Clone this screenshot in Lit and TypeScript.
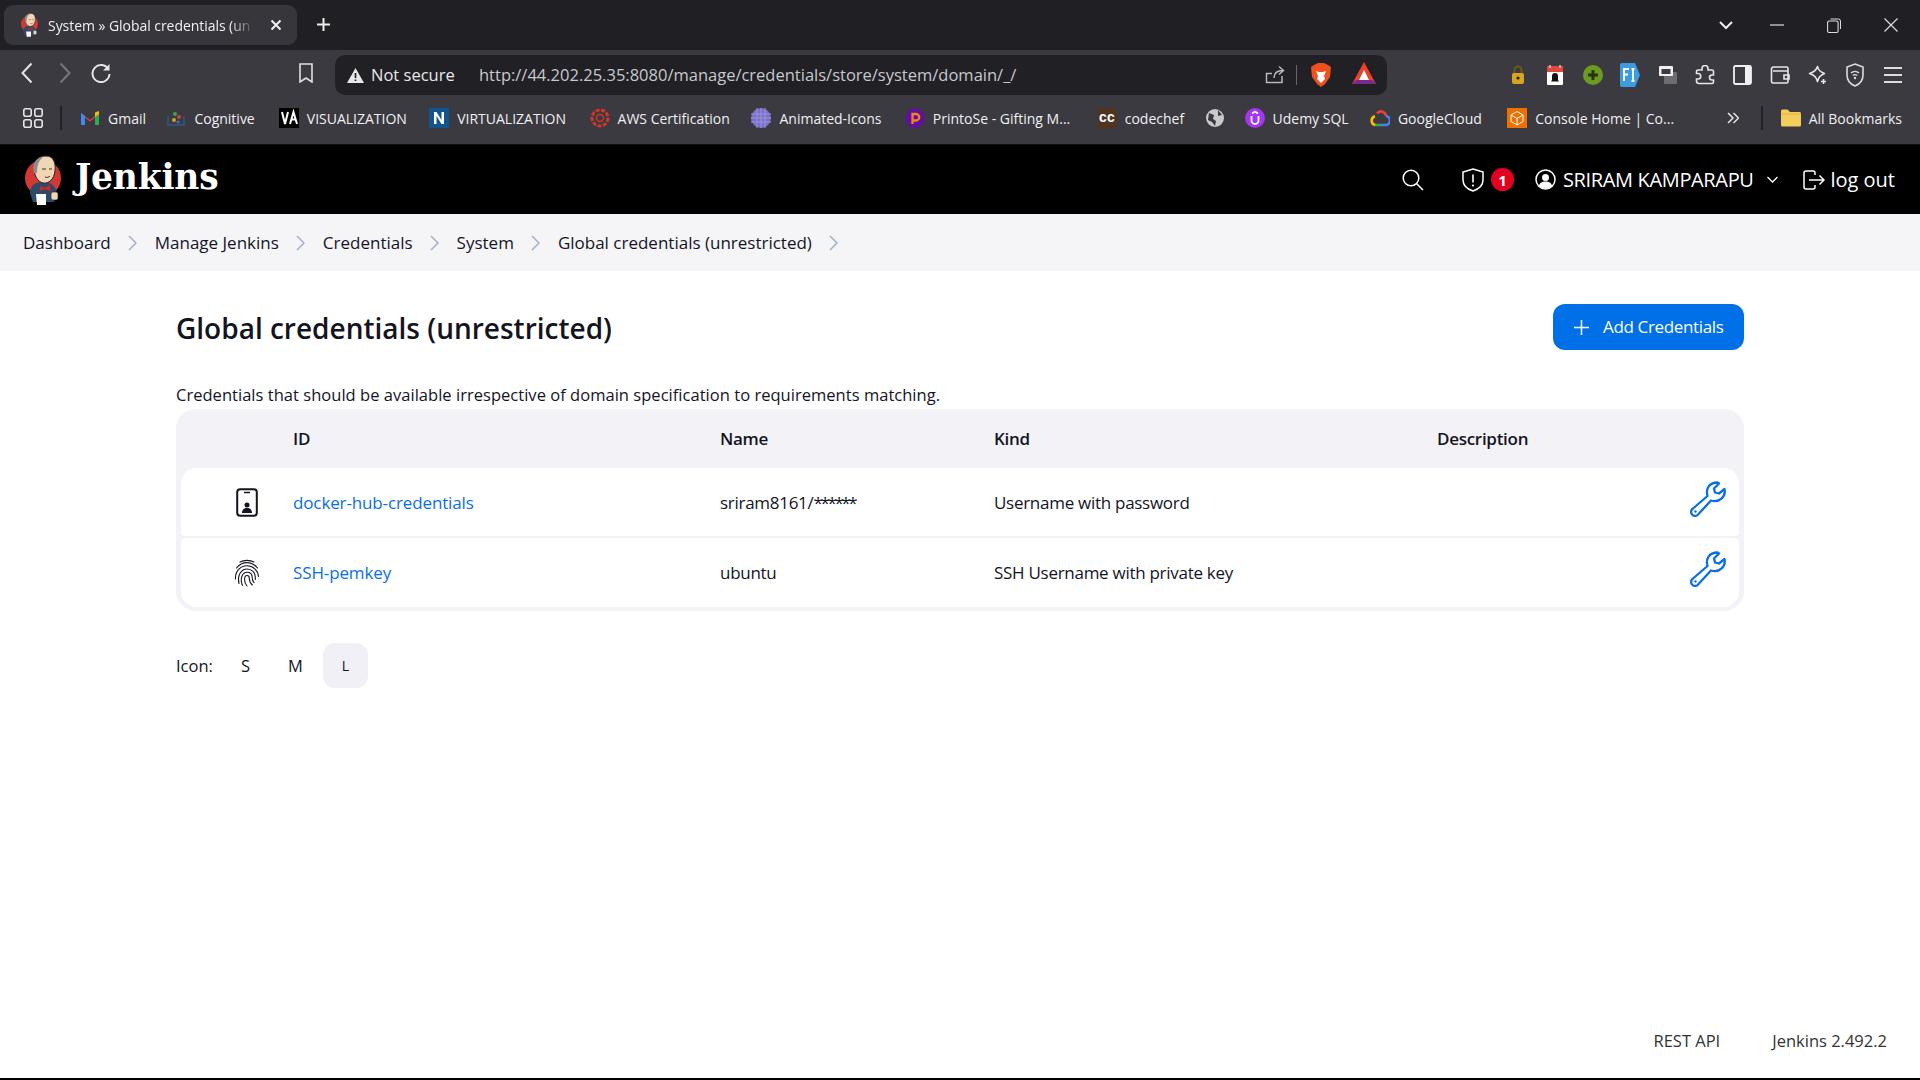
import { LitElement, html, css, svg } from "lit";
import { customElement } from "lit/decorators.js";

const i = (w: number, h: number, body: unknown, vb = `0 0 ${w} ${h}`) =>
  html`<svg width=${w} height=${h} viewBox=${vb} fill="none">${body}</svg>`;

const mascot = (s: number) => html`<svg width=${s} height=${s * 1.25} viewBox="0 0 40 50" fill="none">
  <circle cx="20" cy="23" r="18" fill="#d33833"/>
  <path d="M7 38 C7 30 13 27 20 27 C28 27 33 31 34 39 L31 47 L10 47Z" fill="#2f4a66"/>
  <path d="M11 13 C11 5 17 1 23 1 C30 1 33 7 32 16 C31 24 26 29 20 28 C15 27 11 21 11 13Z" fill="#f0d6b7" stroke="#222" stroke-width="1"/>
  <path d="M11 18 C8 9 13 2 22 1 C16 4 14 10 14 18Z" fill="#8d8d8d"/>
  <path d="M19 14h4M26 14h3M22 22c2 1 4 0 5-1" stroke="#333" stroke-width="1"/>
  <path d="M17 31l5 2 5-3v6l-5-2-5 2z" fill="#e02020"/>
  <path d="M13 39h10v11h-9z" fill="#fff"/>
  <rect x="28" y="37" width="7" height="8" rx="2" fill="#f0d6b7" stroke="#222" stroke-width=".6"/>
</svg>`;

const chevL = (c: string) => i(12, 22, svg`<path d="M10.500 1.500 1.500 11l9 9.500" stroke=${c} stroke-width="2"/>`);
const chevR = (c: string) => i(12, 22, svg`<path d="M1.500 1.500 10.500 11l-9 9.500" stroke=${c} stroke-width="2"/>`);

const bookmarks = [
  { t: "Gmail", w: 38, icon: i(20, 16, svg`<path d="M1 15V3l9 7 9-7v12h-4V7.500L10 11.500 5 7.500V15z" fill="#ea4335"/><path d="M1 15V3l4 3v9z" fill="#4285f4"/><path d="M19 15V3l-4 3v9z" fill="#34a853"/><path d="M15 2.500 19 1v3l-4 3z" fill="#fbbc04"/>`) },
  { t: "Cognitive", w: 64, icon: i(20, 20, svg`<path d="M2 8v9h16V8" stroke="#2b5a86" stroke-width="1.600"/><circle cx="9" cy="6" r="2" fill="#3aa655"/><circle cx="13" cy="9" r="2" fill="#d04040"/><circle cx="8" cy="12" r="2" fill="#c9a227"/><circle cx="12" cy="14" r="1.600" fill="#3a6fc0"/>`) },
  { t: "VISUALIZATION", w: 102, icon: i(20, 20, svg`<rect width="20" height="20" fill="#000"/><path d="M3 4l3 12 3-12M11 16l3.500-12L18 16M12 11.500h5" stroke="#fff" stroke-width="2"/>`) },
  { t: "VIRTUALIZATION", w: 112, icon: i(20, 20, svg`<rect width="20" height="20" fill="#13548e"/><path d="M5 16V4h2.500l5 8V4H15v12h-2.500l-5-8v8z" fill="#fff"/>`) },
  { t: "AWS Certification", w: 113.5, icon: i(20, 20, svg`<circle cx="10" cy="10" r="8" stroke="#d8352a" stroke-width="3" stroke-dasharray="4 1.500"/><circle cx="10" cy="10" r="3.500" stroke="#d8352a" stroke-width="1.400"/>`) },
  { t: "Animated-Icons", w: 105, icon: i(20, 20, svg`<circle cx="10" cy="10" r="10" fill="#7a70c8"/><path d="M0 6h20M0 10h20M0 14h20M6 0v20M10 0v20M14 0v20" stroke="#9a92dc" stroke-width="1"/>`) },
  { t: "PrintoSe - Gifting M...", w: 143.5, icon: i(20, 20, svg`<circle cx="10" cy="10" r="10" fill="#5e1396"/><path d="M7.500 16V6h3.500a3 3 0 0 1 0 6.500H7.500" stroke="#f58220" stroke-width="2.300"/>`) },
  { t: "codechef", w: 61, icon: html`<span class="cc">cc</span>` },
  { t: "", w: -8, icon: i(18, 18, svg`<circle cx="9" cy="9" r="9" fill="#c9c9cc"/><path d="M3 4l5 2-1 4 3 2-1 5-3-4-4-2zM12 1l4 5-4 1z" fill="#3a3a40"/>`) },
  { t: "Udemy SQL", w: 77, icon: i(20, 20, svg`<circle cx="10" cy="10" r="10" fill="#a435f0"/><path d="M6.500 8v4.500a3.500 3.500 0 0 0 7 0V8M7 5.500 10 3.500 13 5.500" stroke="#fff" stroke-width="1.800"/>`) },
  { t: "GoogleCloud", w: 89, icon: i(20, 18, svg`<path d="M7 4.500A5 5 0 0 1 16 7" stroke="#ea4335" stroke-width="2.600"/><path d="M16 7a4.500 4.500 0 0 1-1 9h-4" stroke="#4285f4" stroke-width="2.600"/><path d="M11 16H5.500" stroke="#34a853" stroke-width="2.600"/><path d="M5.500 16A4.500 4.500 0 0 1 5 7.200" stroke="#fbbc04" stroke-width="2.600"/>`) },
  { t: "Console Home | Co...", w: 138, icon: i(20, 20, svg`<rect width="20" height="20" fill="#ed7100"/><path d="M10 3.500 16 7v6.500L10 17l-6-3.500V7zM4 7l6 3.500L16 7M10 10.500V17" stroke="#fff" stroke-width="1"/>`) },
];

const extIcons = [
  i(14, 20, svg`<rect x="1" y="8" width="12" height="11" rx="2" fill="#d9a520"/><path d="M3.500 8V5a3.500 3.500 0 0 1 7 0v3" stroke="#6b5a1a" stroke-width="2"/><circle cx="7" cy="13" r="1.600" fill="#222"/>`),
  i(16, 20, svg`<rect y="1" width="16" height="19" rx="1" fill="#fff"/><rect y="1" width="16" height="6" fill="#e0483e"/><path d="M8 8a3 3 0 0 0-3 3v4l-1 1.500h8L11 15v-4a3 3 0 0 0-3-3z" fill="#111"/><path d="M3 0v3M13 0v3" stroke="#ccc" stroke-width="1.500"/>`),
  i(20, 20, svg`<circle cx="10" cy="10" r="10" fill="#6d9b1f"/><path d="M10 5v10M5 10h10" stroke="#26350c" stroke-width="3"/>`),
  i(20, 24, svg`<path d="M2 0h13l5 12-5 12H2a2 2 0 0 1-2-2V2a2 2 0 0 1 2-2z" fill="#3d9be0"/><path d="M4 18V6h5M4 11.500h4M11.500 6h3M13 6v12M11.500 18h3" stroke="#fff" stroke-width="1.800"/>`),
  i(18, 18, svg`<rect x="5" y="6" width="13" height="12" rx="1" fill="#6d6d70"/><rect width="14" height="10" rx="1" fill="#f0f0f0"/><rect x="2.500" y="3" width="9" height="5" fill="#3a3a40"/>`),
  i(20, 20, svg`<path d="M7 3.500a3 3 0 0 1 6 0V5h4a1.500 1.500 0 0 1 1.500 1.500V10H17a2.500 2.500 0 0 0 0 5h1.500v2a1.500 1.500 0 0 1-1.500 1.500H4A2.500 2.500 0 0 1 1.500 16v-2H3a2.700 2.700 0 0 0 0-5.500H1.500V6.500A1.500 1.500 0 0 1 3 5h4z" stroke="#e6e6e8" stroke-width="1.600"/>`),
  i(19, 20, svg`<rect x="1" y="1" width="17" height="18" rx="1.500" stroke="#f0f0f0" stroke-width="1.800"/><rect x="12" y="1" width="6" height="18" fill="#f0f0f0"/>`),
  i(20, 20, svg`<path d="M18 6V3.500A1.500 1.500 0 0 0 16.500 2H3.500A2 2 0 0 0 1.500 4v12.500A1.500 1.500 0 0 0 3 18h13.500a1.500 1.500 0 0 0 1.500-1.500V6H3M14 10h5v4h-5z" stroke="#e6e6e8" stroke-width="1.600"/>`),
  i(20, 20, svg`<path d="M9.500 1.500c1 4 2.500 5.500 7 7-4 1.500-6 3.500-7 8-1-4.500-3-6.500-8-8 5-1.500 7-3 8-7z" stroke="#e6e6e8" stroke-width="1.600" stroke-linejoin="round"/><path d="M15.500 14v5M13 16.500h5" stroke="#e6e6e8" stroke-width="1.600"/>`),
  i(18, 24, svg`<path d="M9 1l8 3v8c0 5-3 9-8 11-5-2-8-6-8-11V4z" stroke="#dcdcdf" stroke-width="1.600"/><path d="M5 10a6 6 0 0 1 8 0M6.800 12.500a3.500 3.500 0 0 1 4.400 0" stroke="#dcdcdf" stroke-width="1.400"/><circle cx="9" cy="15" r="1.200" fill="#dcdcdf"/>`),
  i(20, 18, svg`<path d="M1 2h18M1 9h18M1 16h18" stroke="#dcdcdf" stroke-width="1.800"/>`),
];

const wrench = i(36, 36, svg`<path d="M17.500 15C15.500 8 19 1.500 27.500 1.500L29 2.500L24 7.500L25 11.500L29 12.500L34.500 8C36 15 30 22 21 19.500L8.500 33A4 4 0 1 1 3 27.500Z" stroke="#0a6fe2" stroke-width="2.300" stroke-linejoin="round"/><circle cx="5.500" cy="30.500" r="1.200" fill="#0a6fe2"/>`);

const idIcon = i(22, 29, svg`<rect x="1.200" y="1.200" width="19.600" height="26.600" rx="3" stroke="#14141f" stroke-width="2"/><path d="M8 4.500h6" stroke="#14141f" stroke-width="1.500"/><circle cx="11" cy="17" r="2.500" fill="#14141f"/><path d="M6 25c0-3.500 2-5 5-5s5 1.500 5 5z" fill="#14141f"/>`);

const fingerprint = i(26, 28, svg`<g stroke="#14141f" stroke-width="1.100" stroke-linecap="round">
  <path d="M6 3C10 .800 16 .800 20 3"/>
  <path d="M2.500 9C5.500 5 9.500 3.600 13 3.600c4 0 7.500 1.800 10.500 5.400"/>
  <path d="M1.500 20C1 12 6.500 6.800 13 6.800c6 0 11 4.400 11.500 10.700"/>
  <path d="M5 24.500C3 16 7.500 10 13 10c5 0 8.300 3.800 8.300 8v2.500"/>
  <path d="M8.500 26.500C5.500 19.500 8.500 13.200 13 13.200c3.200 0 5.200 2.300 5.200 5.300 0 2 .5 3.700 1.800 5.200"/>
  <path d="M13 27C9.500 23 10 16.500 13 16.500c1.800 0 2.300 1.300 2.300 2.700 0 2.700 1 5 3 6.800"/>
</g>`);

const crumbChevron = i(9, 16, svg`<path d="M1 1l7 7-7 7" stroke="#a0b0c8" stroke-width="1.500"/>`);

@customElement("app-root")
export class AppRoot extends LitElement {
  static styles = css`
    :host { display: flex; flex-direction: column; height: 100vh; background: #fff; overflow: hidden;
      font-family: "Open Sans", "Liberation Sans", sans-serif; color: #14141f; }
    .tabstrip { height: 50px; flex: none; background: #1f1f24; display: flex; align-items: flex-start; color: #eee; }
    .tab { width: 293px; height: 40px; margin: 5px 0 0 4px; background: #36363c; border-radius: 9px; display: flex; align-items: center; padding-left: 16px; box-sizing: border-box; }
    .tab-title { width: 207px; margin-left: 9px; overflow: visible; white-space: nowrap; font-size: 14px; letter-spacing: -.05px; color: #f0f0f0;
      -webkit-mask-image: linear-gradient(90deg, #000 88%, transparent); mask-image: linear-gradient(90deg, #000 88%, transparent); }
    .tab-x { margin-left: 15px; display: flex; }
    .plus { margin: 17px 0 0 19px; display: flex; }
    .wincontrols { margin-left: auto; display: flex; align-items: center; height: 50px; padding-right: 22px; }
    .wincontrols svg { display: block; }
    .win-chev { margin-right: 37px; } .win-min { margin-right: 43px; } .win-rest { margin-right: 43px; }

    .toolbar { height: 45px; flex: none; background: #3a3a40; display: flex; align-items: flex-start; }
    .nav { display: flex; align-items: center; height: 40px; margin-top: 5px; }
    .back { margin-left: 21px; } .fwd { margin-left: 26px; } .reload { margin-left: 20px; } .bm { margin-left: 188px; }
    .addr { width: 1052px; flex: none; height: 40px; margin: 5px 0 0 22px; background: #202025; border-radius: 10px; display: flex; align-items: center; padding-left: 12px; box-sizing: border-box; color: #e8e8ea; }
    .ns { margin-left: 7px; font-size: 16.500px; flex: 0 0 108px; white-space: nowrap; margin-bottom: 2px; }
    .url { font-size: 16.500px; flex: 0 0 786px; white-space: nowrap; color: #c8c8cc; margin-bottom: 2px; }
    .addr-sep { width: 1px; height: 20px; background: #666; margin: 0 14px 0 11px; }
    .share { display: flex; }
    .brave { display: flex; margin-right: 21px; }
    .exts { margin-left: 112px; display: flex; align-items: center; height: 40px; margin-top: 5px; }
    .ext { width: 37.500px; display: flex; justify-content: center; }

    .bookmarks { height: 50px; flex: none; background: #3a3a40; display: flex; align-items: center; box-sizing: border-box; border-bottom: 1px solid #111; padding-bottom: 3px; font-size: 14px; color: #f0f0f0; }
    .grid { margin-left: 23px; display: flex; }
    .bm-sep { width: 2px; height: 24px; background: #222227; margin: 0 18px 0 17px; }
    .bmitem { display: flex; align-items: center; gap: 8px; margin-right: 20.400px; white-space: nowrap; }
    .cc { width: 20px; height: 20px; background: #4f3422; color: #fff; font: bold 14px/20px "Liberation Mono", monospace; text-align: center; letter-spacing: -.5px; }
    .more { margin-left: 33px; display: flex; }
    .bm-sep2 { width: 2px; height: 24px; background: #222227; margin: 0 18px 0 22px; }
    .folder { display: flex; gap: 8px; align-items: center; white-space: nowrap; }

    .header { height: 69px; flex: none; background: #000; display: flex; align-items: center; color: #fff; }
    .logo { margin-left: 23px; display: flex; }
    .brand { font: bold 34.500px "DejaVu Serif", serif; margin-left: 12px; margin-bottom: 6px; letter-spacing: -.2px; }
    .hright { margin-left: auto; display: flex; align-items: center; padding-right: 25px; font-size: 20px; }
    .hright svg { display: block; }
    .badge { width: 23px; height: 23px; border-radius: 50%; background: #e6001f; font-size: 15px; font-weight: 700; display: flex; align-items: center; justify-content: center; margin-left: 7px; }
    .shield { margin-left: 38px; }
    .user { margin-left: 21px; }
    .uname { margin-left: 7px; letter-spacing: -.35px; width: 190px; white-space: nowrap; }
    .uchev { margin-left: 14px; }
    .lo { margin-left: 25px; }
    .lotext { margin-left: 5.500px; }

    .crumbs { height: 57px; flex: none; background: #f5f5f8; display: flex; align-items: center; padding-left: 23px; font-size: 17px; }
    .crumbs a { color: #14141f; white-space: nowrap; }
    .crumbs svg { display: block; margin: 0 17.500px; }

    main { padding: 33px 176px 0; display: flex; flex-direction: column; flex: 1; }
    .titlerow { display: flex; justify-content: space-between; align-items: center; height: 46px; }
    h1 { font-size: 28px; font-weight: 600; margin: 1px 0 0; }
    .add { width: 191px; height: 46px; background: #0070e8; color: #fff; border-radius: 12px; display: flex; align-items: center; padding-left: 21px; box-sizing: border-box; font-size: 17px; font-weight: 500; letter-spacing: -.35px; gap: 14px; }
    .add span { margin-bottom: 1px; }
    .desc { font-size: 16.500px; line-height: 24px; margin: 33px 0 2px; white-space: nowrap; letter-spacing: .03px; }
    .table { background: #f2f2f7; border-radius: 20px; padding: 0 5px 4px; }
    .row { display: grid; grid-template-columns: 112px 427px 274px 443px 1fr; align-items: center; font-size: 17px; letter-spacing: -.28px; }
    .thead { height: 59px; font-weight: 600; }
    .trow { height: 68px; background: #fff; border-radius: 4px; }
    .trow + .trow { margin-top: 2px; height: 69px; }
    .r1 { border-radius: 16px 16px 4px 4px; }
    .r2 { border-radius: 4px 4px 16px 16px; }
    .ico { display: flex; justify-content: center; width: 131px; }
    .ico svg { display: block; }
    .link { color: #0a6fe2; white-space: nowrap; letter-spacing: -.13px; }
    .stars { letter-spacing: -2.400px; }
    .act { display: flex; justify-content: flex-end; padding-right: 13px; margin-bottom: 7px; }
    .act svg { display: block; }
    .sizes { display: flex; align-items: center; margin-top: 32px; height: 45px; font-size: 16.500px; }
    .sizes .lbl { width: 47px; }
    .sz { width: 45px; height: 45px; margin-right: 5px; display: flex; align-items: center; justify-content: center; border-radius: 12px; }
    .sz.on { background: #f0f0f6; font-size: 14px; }
    footer { height: 76px; flex: none; display: flex; justify-content: flex-end; align-items: flex-start; gap: 52px; padding: 25px 33px 0 0; font-size: 16.500px; line-height: 24px; color: #333; box-sizing: border-box; border-bottom: 2px solid #000; }
  `;

  render() {
    return html`
      <div class="tabstrip">
        <div class="tab">
          ${mascot(19)}
          <span class="tab-title">System » Global credentials (un</span>
          <span class="tab-x">${i(12, 12, svg`<path d="M1.500 1.500l9 9M10.500 1.500l-9 9" stroke="#f0f0f0" stroke-width="2"/>`)}</span>
        </div>
        <span class="plus">${i(15, 15, svg`<path d="M7.500 1v13M1 7.500h13" stroke="#eee" stroke-width="2"/>`)}</span>
        <div class="wincontrols">
          <span class="win-chev">${i(14, 9, svg`<path d="M1 1l6 6 6-6" stroke="#eee" stroke-width="2"/>`)}</span>
          <span class="win-min">${i(14, 2, svg`<path d="M0 1h14" stroke="#ddd" stroke-width="1.200"/>`)}</span>
          <span class="win-rest">${i(14, 15, svg`<rect x=".600" y="3" width="10.500" height="11.500" rx="1.500" stroke="#ddd" stroke-width="1.100"/><path d="M3.500 1h8a2 2 0 0 1 2 2v8" stroke="#ddd" stroke-width="1"/>`)}</span>
          <span>${i(14, 14, svg`<path d="M.500.500l13 13M13.500.500l-13 13" stroke="#ddd" stroke-width="1.200"/>`)}</span>
        </div>
      </div>

      <div class="toolbar">
        <div class="nav">
          <span class="back">${chevL("#e6e6e8")}</span>
          <span class="fwd">${chevR("#77777c")}</span>
          <span class="reload">${i(20, 20, svg`<path d="M17.500 6.500A8.500 8.500 0 1 0 18.500 11" stroke="#e6e6e8" stroke-width="2"/><path d="M18.500 1v6.500H12z" fill="#e6e6e8"/>`)}</span>
          <span class="bm">${i(14, 20, svg`<path d="M1 1h12v18l-6-4-6 4z" stroke="#e0e0e2" stroke-width="1.600"/>`)}</span>
        </div>
        <div class="addr">
          ${i(17, 15, svg`<path d="M8.500 0 17 15H0z" fill="#e8e8ea"/><path d="M8.500 5v5M8.500 11.500v1.500" stroke="#222" stroke-width="1.700"/>`)}
          <span class="ns">Not secure</span>
          <span class="url">http://44.202.25.35:8080/manage/credentials/store/system/domain/_/</span>
          <span class="share">${i(20, 20, svg`<path d="M17 11v6.500H1.500V8.500H7M9 13c0-5 3-7.500 9-7.500M14 1.500l4.500 4-4.500 4" stroke="#b8b8bc" stroke-width="1.500"/>`)}</span>
          <span class="addr-sep"></span>
          <span class="brave">${i(20, 24, svg`<path d="M3 2l4-2h6l4 2 3 2-1 10-5 7-4 3-4-3-5-7L0 4z" fill="#f0501e"/><path d="M5 8l3 1h4l3-1-2 5 1 3-4 4-4-4 1-3z" fill="#fff"/>`)}</span>
          <span class="tri">${i(24, 22, svg`<path d="M12 0 24 22H0z" fill="#e8422e"/><path d="M0 22h24l-4-4H4z" fill="#7a2a8f"/><path d="M12 8l5 10H7z" fill="#fff"/>`)}</span>
        </div>
        <div class="exts">${extIcons.map((e) => html`<span class="ext">${e}</span>`)}</div>
      </div>

      <div class="bookmarks">
        <span class="grid">${i(20, 20, svg`<g stroke="#e6e6e8" stroke-width="1.600"><rect x=".800" y=".800" width="7.400" height="7.400" rx="2"/><rect x="11.800" y=".800" width="7.400" height="7.400" rx="2"/><rect x=".800" y="11.800" width="7.400" height="7.400" rx="2"/><rect x="11.800" y="11.800" width="7.400" height="7.400" rx="2"/></g>`)}</span>
        <span class="bm-sep"></span>
        ${bookmarks.map((b) => html`<span class="bmitem">${b.icon}${b.t ? html`<span style="width:${b.w}px">${b.t}</span>` : ""}</span>`)}
        <span class="more">${i(12, 12, svg`<path d="M1 1l5 5-5 5M6.500 1l5 5-5 5" stroke="#e6e6e8" stroke-width="1.500"/>`)}</span>
        <span class="bm-sep2"></span>
        <span class="folder">${i(20, 18, svg`<path d="M0 2a1.500 1.500 0 0 1 1.500-1.500h5L9 3h9.500A1.500 1.500 0 0 1 20 4.500V16a1.500 1.500 0 0 1-1.500 1.500h-17A1.500 1.500 0 0 1 0 16z" fill="#f3ce5a"/><path d="M0 5h20" stroke="#e0b040"/>`)}All Bookmarks</span>
      </div>

      <div class="header">
        <span class="logo">${mascot(40)}</span>
        <span class="brand">Jenkins</span>
        <div class="hright">
          ${i(22, 22, svg`<circle cx="9" cy="9" r="7.800" stroke="#fff" stroke-width="1.500"/><path d="M14.500 14.500l6.500 6.500" stroke="#fff" stroke-width="1.500"/>`)}
          <span class="shield">${i(22, 24, svg`<path d="M11 1l10 3v8c0 5-4 9-10 11C5 21 1 17 1 12V4z" stroke="#fff" stroke-width="1.500"/><path d="M11 6.500v8" stroke="#fff" stroke-width="1.600"/><circle cx="11" cy="17.500" r="1.100" fill="#fff"/>`)}</span>
          <span class="badge">1</span>
          <span class="user">${i(21, 21, svg`<circle cx="10.500" cy="10.500" r="9.500" stroke="#fff" stroke-width="1.500"/><circle cx="10.500" cy="8.500" r="3.500" fill="#fff"/><path d="M3.800 17c1-3.500 3.500-4.500 6.700-4.500s5.700 1 6.700 4.500c-3.500 3.300-10 3.300-13.400 0z" fill="#fff"/>`)}</span>
          <span class="uname">SRIRAM KAMPARAPU</span>
          <span class="uchev">${i(11, 7, svg`<path d="M.500 1l5 5 5-5" stroke="#fff" stroke-width="1.300"/>`)}</span>
          <span class="lo">${i(22, 20, svg`<path d="M12 5V3a2 2 0 0 0-2-2H3a2 2 0 0 0-2 2v14a2 2 0 0 0 2 2h7a2 2 0 0 0 2-2v-2M6 10h15M16.500 5.500 21 10l-4.500 4.500" stroke="#fff" stroke-width="1.500"/>`)}</span>
          <span class="lotext">log out</span>
        </div>
      </div>

      <nav class="crumbs">
        ${["Dashboard", "Manage Jenkins", "Credentials", "System", "Global credentials (unrestricted)"].map((c) => html`<a>${c}</a>${crumbChevron}`)}
      </nav>

      <main>
        <div class="titlerow">
          <h1>Global credentials (unrestricted)</h1>
          <div class="add">${i(15, 15, svg`<path d="M7.500 0v15M0 7.500h15" stroke="#fff" stroke-width="1.500"/>`)}<span>Add Credentials</span></div>
        </div>
        <p class="desc">Credentials that should be available irrespective of domain specification to requirements matching.</p>
        <div class="table">
          <div class="row thead"><span></span><span>ID</span><span>Name</span><span>Kind</span><span>Description</span></div>
          <div class="row trow r1">
            <span class="ico">${idIcon}</span><span class="link">docker-hub-credentials</span><span>sriram8161/<span class="stars">******</span></span><span>Username with password</span><span class="act">${wrench}</span>
          </div>
          <div class="row trow r2">
            <span class="ico">${fingerprint}</span><span class="link">SSH-pemkey</span><span>ubuntu</span><span>SSH Username with private key</span><span class="act">${wrench}</span>
          </div>
        </div>
        <div class="sizes"><span class="lbl">Icon:</span><span class="sz">S</span><span class="sz">M</span><span class="sz on">L</span></div>
      </main>
      <footer><span>REST API</span><span>Jenkins 2.492.2</span></footer>
    `;
  }
}
